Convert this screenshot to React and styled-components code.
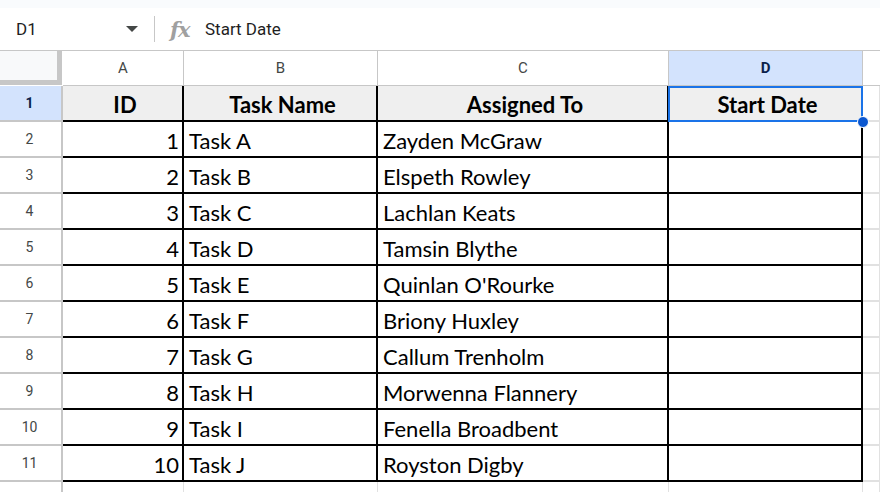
import styled, { createGlobalStyle } from 'styled-components';

const GlobalStyle = createGlobalStyle`
	html, body {
		margin: 0;
		padding: 0;
		background: #fff;
		overflow: hidden;
	}
	* {
		box-sizing: border-box;
	}
`;

const rows = [
	[1, 'Task A', 'Zayden McGraw'],
	[2, 'Task B', 'Elspeth Rowley'],
	[3, 'Task C', 'Lachlan Keats'],
	[4, 'Task D', 'Tamsin Blythe'],
	[5, 'Task E', "Quinlan O'Rourke"],
	[6, 'Task F', 'Briony Huxley'],
	[7, 'Task G', 'Callum Trenholm'],
	[8, 'Task H', 'Morwenna Flannery'],
	[9, 'Task I', 'Fenella Broadbent'],
	[10, 'Task J', 'Royston Digby'],
];

const columns = ['A', 'B', 'C', 'D'];

const App = () => {
	return (
		<Page>
			<GlobalStyle />
			<TopStrip />
			<FormulaBar>
				<NameBox>
					D1
					<Caret />
				</NameBox>
				<Divider />
				<Fx>fx</Fx>
				<FormulaText>Start Date</FormulaText>
			</FormulaBar>
			<Sheet>
				<Corner />
				{columns.map((c) => (
					<ColHeader key={c} $active={c === 'D'}>
						{c}
					</ColHeader>
				))}
				<ColHeader $extra />

				<RowHeader $active>1</RowHeader>
				<Cell $head>ID</Cell>
				<Cell $head>Task Name</Cell>
				<Cell $head>Assigned To</Cell>
				<Cell $head $selected>
					Start Date
					<Handle />
				</Cell>
				<Blank />

				{rows.map(([id, task, person], i) => (
					<Row key={id} n={i + 2} id={id} task={task} person={person} />
				))}

				<RowHeader $last />
				<Blank $last />
				<Blank $last />
				<Blank $last />
				<Blank $last />
				<Blank $last />
			</Sheet>
		</Page>
	);
};

const Row = ({ n, id, task, person }) => (
	<>
		<RowHeader>{n}</RowHeader>
		<Cell $right>{id}</Cell>
		<Cell>{task}</Cell>
		<Cell>{person}</Cell>
		<Cell />
		<Blank />
	</>
);

const Page = styled.div`
	width: 880px;
	height: 492px;
	overflow: hidden;
	font-family: Roboto, 'Liberation Sans', sans-serif;
`;

const TopStrip = styled.div`
	height: 8px;
	background: #f9fbfd;
`;

const FormulaBar = styled.div`
	height: 43px;
	display: flex;
	align-items: center;
	background: #fff;
	border-bottom: 1px solid #c7c7c7;
	color: #1f1f1f;
	font-size: 17px;
`;

const NameBox = styled.div`
	width: 148px;
	padding-left: 16px;
	padding-right: 10px;
	display: flex;
	align-items: center;
	justify-content: space-between;
`;

const Caret = styled.span`
	width: 0;
	height: 0;
	border-left: 6px solid transparent;
	border-right: 6px solid transparent;
	border-top: 6px solid #444746;
`;

const Divider = styled.div`
	width: 1px;
	height: 26px;
	background: #c7c7c7;
	margin-left: 6px;
`;

const Fx = styled.span`
	margin-left: 15px;
	width: 35px;
	font-family: 'DejaVu Serif', 'Liberation Serif', serif;
	font-style: italic;
	font-weight: bold;
	font-size: 21px;
	color: #a0a0a0;
	letter-spacing: -1px;
`;

const FormulaText = styled.span`
	font-size: 17px;
	color: #1f1f1f;
`;

const Sheet = styled.div`
	display: grid;
	grid-template-columns: 63px 121px 194px 291px 194px 1fr;
	grid-template-rows: 35px repeat(11, 36px) 20px;
`;

const Corner = styled.div`
	background: #f8f9fa;
	border-right: 5px solid #c7c7c7;
	border-bottom: 5px solid #c7c7c7;
	margin-right: 1px;
	margin-bottom: 1px;
`;

const ColHeader = styled.div`
	display: flex;
	align-items: center;
	justify-content: center;
	font-size: 15px;
	color: ${(p) => (p.$active ? '#0b1f4a' : '#444746')};
	font-weight: ${(p) => (p.$active ? 700 : 400)};
	background: ${(p) => (p.$active ? '#d3e3fd' : '#fff')};
	border-right: ${(p) => (p.$extra ? 'none' : '1px solid #c7c7c7')};
	border-bottom: 1px solid #c7c7c7;
`;

const RowHeader = styled.div`
	display: flex;
	align-items: center;
	justify-content: center;
	font-size: 14px;
	padding-right: 2px;
	color: ${(p) => (p.$active ? '#0b1f4a' : '#444746')};
	font-weight: ${(p) => (p.$active ? 700 : 400)};
	background: ${(p) => (p.$active ? '#d3e3fd' : '#fff')};
	border-right: 2px solid #c7c7c7;
	border-bottom: ${(p) => (p.$last ? 'none' : '2px solid #c7c7c7')};
`;

const Cell = styled.div`
	position: relative;
	display: flex;
	align-items: center;
	justify-content: ${(p) => (p.$head ? 'center' : p.$right ? 'flex-end' : 'flex-start')};
	padding: ${(p) => (p.$right ? '2px 3px 0 0' : '2px 0 0 5px')};
	font-family: Lato, 'Open Sans', sans-serif;
	font-size: 22px;
	font-weight: ${(p) => (p.$head ? 700 : 400)};
	color: #000;
	background: ${(p) => (p.$head ? '#efefef' : '#fff')};
	border-right: 2px solid #000;
	border-bottom: 2px solid #000;
	white-space: nowrap;

	${(p) =>
		p.$selected &&
		`
		&::after {
			content: '';
			position: absolute;
			inset: 0 -2px -2px -1px;
			border: 2px solid #1a73e8;
			pointer-events: none;
		}
	`}
`;

const Handle = styled.span`
	position: absolute;
	right: -8px;
	bottom: -8px;
	width: 12px;
	height: 12px;
	border-radius: 50%;
	background: #0b57d0;
	border: 1px solid #fff;
	z-index: 2;
`;

const Blank = styled.div`
	background: #fff;
	border-right: 1px solid #e1e1e1;
	border-bottom: ${(p) => (p.$last ? 'none' : '2px solid #e1e1e1')};
`;

export default App;
